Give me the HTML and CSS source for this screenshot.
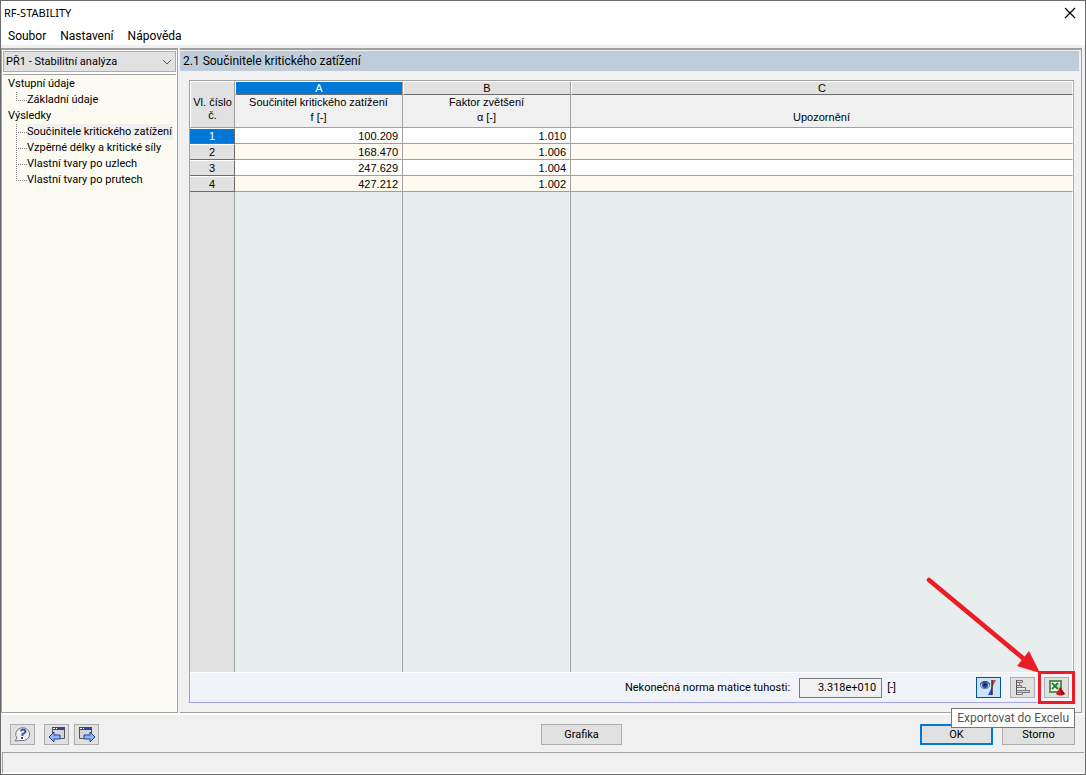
FILE: index.html
```html
<!DOCTYPE html>
<html lang="cs">
<head>
    <meta charset="UTF-8">
    <meta name="viewport" content="width=device-width, initial-scale=1.0">
    <title>RF-STABILITY</title>
    <link rel="stylesheet" href="styles.css">
</head>
<body>
    <div class="window">
        <header class="title-bar">
            <h1>RF-STABILITY</h1>
            <button class="close" aria-label="Zavřít">
                <svg width="12" height="12" viewBox="0 0 12 12"><path d="M1 1l10 10M11 1L1 11" stroke="#000" stroke-width="1.2"/></svg>
            </button>
        </header>
        <nav class="menu-bar">
            <a href="#">Soubor</a>
            <a href="#">Nastavení</a>
            <a href="#">Nápověda</a>
        </nav>

        <div class="main">
            <aside class="sidebar">
                <div class="case-select">
                    <select aria-label="Případ">
                        <option>PŘ1 - Stabilitní analýza</option>
                    </select>
                    <svg width="10" height="6" viewBox="0 0 10 6"><path d="M1 1l4 4 4-4" fill="none" stroke="#555"/></svg>
                </div>
                <ul class="tree">
                    <li>Vstupní údaje
                        <ul>
                            <li><a href="#">Základní údaje</a></li>
                        </ul>
                    </li>
                    <li>Výsledky
                        <ul>
                            <li><a href="#" class="selected">Součinitele kritického zatížení</a></li>
                            <li><a href="#">Vzpěrné délky a kritické síly</a></li>
                            <li><a href="#">Vlastní tvary po uzlech</a></li>
                            <li><a href="#">Vlastní tvary po prutech</a></li>
                        </ul>
                    </li>
                </ul>
            </aside>

            <section class="content">
                <h2>2.1 Součinitele kritického zatížení</h2>
                <div class="grid-box">
                    <div class="grid-area">
                        <table class="grid">
                            <colgroup>
                                <col class="col-no">
                                <col class="col-value">
                                <col class="col-value">
                                <col>
                            </colgroup>
                            <thead>
                                <tr class="letters">
                                    <th rowspan="2" class="corner">Vl. číslo<br>č.</th>
                                    <th class="active">A</th>
                                    <th>B</th>
                                    <th>C</th>
                                </tr>
                                <tr class="names">
                                    <th>Součinitel kritického zatížení<br>f [-]</th>
                                    <th>Faktor zvětšení<br>α [-]</th>
                                    <th><br>Upozornění</th>
                                </tr>
                            </thead>
                            <tbody>
                                <tr><th class="active">1</th><td>100.209</td><td>1.010</td><td></td></tr>
                                <tr><th>2</th><td>168.470</td><td>1.006</td><td></td></tr>
                                <tr><th>3</th><td>247.629</td><td>1.004</td><td></td></tr>
                                <tr><th>4</th><td>427.212</td><td>1.002</td><td></td></tr>
                                <tr class="filler"><th></th><td></td><td></td><td></td></tr>
                            </tbody>
                        </table>
                    </div>
                    <div class="grid-footer">
                        <label for="norm">Nekonečná norma matice tuhosti:</label>
                        <input type="text" id="norm" value="3.318e+010" readonly>
                        <span class="unit">[-]</span>
                        <div class="tools">
                            <button class="icon-btn on" aria-label="Zobrazit">
                                <svg width="18" height="18" viewBox="0 0 18 18">
                                    <ellipse cx="5" cy="6" rx="4.500" ry="3.500" fill="#c3cfe8" stroke="#6b7cab"/>
                                    <path d="M0 5q5-5 10 0" fill="none" stroke="#39457a"/>
                                    <circle cx="5" cy="6" r="3" fill="#28478f"/>
                                    <circle cx="5" cy="5.500" r="1" fill="#0c1c50"/>
                                    <path d="M12 1h4l-4 8z" fill="#e84040"/>
                                    <path d="M12 8v8H8z" fill="#3048d8"/>
                                    <path d="M12 1v15" stroke="#333" stroke-width="1.500"/>
                                </svg>
                            </button>
                            <button class="icon-btn" aria-label="Pruhy">
                                <svg width="18" height="18" viewBox="0 0 18 18">
                                    <g stroke="#777" fill="#e2eee4">
                                        <path d="M2.500 1.500h6v2h-6zM2.500 6.500h5v2h-5zM2.500 11.500h13v2h-13z" fill="#f0c8c8"/>
                                        <path d="M2.500 3.500h3v3h-3zM2.500 8.500h9v3h-9zM2.500 13.500h6v2h-6z"/>
                                        <path d="M2.500 1v15" stroke="#555"/>
                                    </g>
                                </svg>
                            </button>
                            <div class="export">
                                <button class="icon-btn" aria-label="Exportovat do Excelu" aria-describedby="export-tip">
                                    <svg width="18" height="18" viewBox="0 0 18 18">
                                        <path d="M2 2h11v11H2z" fill="#f4faf2" stroke="#5b8f55" stroke-width="2"/>
                                        <path d="M9 5h3M9 7h3M9 9h3" stroke="#9fc09f"/>
                                        <path d="M4 4l6 6M10 4l-6 6" stroke="#278432" stroke-width="2"/>
                                        <path d="M12 8l5 7q-5 3-9 0z" fill="#d81820"/>
                                        <path d="M12 8l5 7-4 1.500z" fill="#901018"/>
                                    </svg>
                                </button>
                                <svg class="arrow" width="114" height="98" viewBox="0 0 114 98">
                                    <path d="M3 4L98 83" stroke="#ed1c24" stroke-width="4.500" stroke-linecap="round"/>
                                    <path d="M114 97L103 75 91 90z" fill="#ed1c24"/>
                                </svg>
                                <div class="tooltip" id="export-tip" role="tooltip">Exportovat do Excelu</div>
                            </div>
                        </div>
                    </div>
                </div>
            </section>
        </div>

        <footer class="button-bar">
            <div class="left">
                <button class="icon-btn help" aria-label="Nápověda">
                    <svg width="18" height="18" viewBox="0 0 18 18">
                        <path d="M1 15l2-3a7 6.500 0 1 1 4 2.500z" fill="#f0f0f4" stroke="#777"/>
                        <path d="M6.500 5q3-3 5 0 0 2-3 3v2M8 11v2" fill="none" stroke="#3b549e" stroke-width="2"/>
                    </svg>
                </button>
                <button class="icon-btn" aria-label="Předchozí">
                    <svg width="18" height="18" viewBox="0 0 18 18">
                        <path d="M4.500 1.500h12v11h-12z" fill="#d4d4d6" stroke="#555"/>
                        <path d="M4 2.500h13" stroke="#34489a" stroke-width="3"/>
                        <path d="M5 2.500h2M8 2.500h1" stroke="#fff"/>
                        <path d="M1 11l5-5v3h6v4H6v3z" fill="#8cb4f4" stroke="#24409c"/>
                    </svg>
                </button>
                <button class="icon-btn" aria-label="Další">
                    <svg width="18" height="18" viewBox="0 0 18 18">
                        <path d="M1.500 1.500h12v11h-12z" fill="#d4d4d6" stroke="#555"/>
                        <path d="M1 2.500h13" stroke="#34489a" stroke-width="3"/>
                        <path d="M2 2.500h2M5 2.500h1" stroke="#fff"/>
                        <path d="M17 11l-5-5v3H6v4h6v3z" fill="#8cb4f4" stroke="#24409c"/>
                    </svg>
                </button>
            </div>
            <button class="btn graphics">Grafika</button>
            <div class="right">
                <button class="btn default">OK</button>
                <button class="btn">Storno</button>
            </div>
        </footer>
        <div class="status-bar"></div>
    </div>
</body>
</html>
```
FILE: styles.css
```css
* {
    box-sizing: border-box;
}
body {
    margin: 0;
    font-family: Roboto, sans-serif;
    font-size: 11px;
    line-height: 16px;
    color: #000;
}
a {
    color: inherit;
    text-decoration: none;
}
button, input, select {
    font: inherit;
    color: inherit;
}
svg {
    display: block;
}
.window {
    height: 100vh;
    display: flex;
    flex-direction: column;
    background-color: #f0f0f0;
    border: 1px solid #6b6b6b;
}

/* title and menu */
.title-bar {
    height: 24px;
    padding: 0 9px 0 3px;
    display: flex;
    align-items: center;
    justify-content: space-between;
    background-color: #fff;
}
.title-bar h1 {
    margin: 0;
    font-family: "Noto Sans", sans-serif;
    font-size: 11px;
    font-weight: normal;
}
.close {
    padding: 0;
    border: none;
    background: none;
}
.menu-bar {
    height: 20px;
    padding: 2px 7px 0;
    display: flex;
    align-items: center;
    gap: 14px;
    background-color: #fff;
    font-size: 12px;
}

/* sidebar */
.main {
    flex: 1;
    min-height: 0;
    margin-top: 3px;
    display: flex;
    gap: 2px;
    border-bottom: 2px solid #fff;
}
.sidebar {
    width: 177px;
    padding: 1px 1px 0;
    display: flex;
    flex-direction: column;
    gap: 2px;
    border: 1px solid #a0a0a0;
    border-top-width: 2px;
    background-color: #fff;
}
.case-select {
    display: grid;
    align-items: center;
}
.case-select select, .case-select svg {
    grid-area: 1 / 1;
}
.case-select select {
    width: 100%;
    height: 21px;
    padding: 1px 20px 0 2px;
    appearance: none;
    border: 1px solid #adadad;
    border-radius: 0;
    background-color: #e1e1e1;
}
.case-select svg {
    justify-self: end;
    margin-right: 4px;
    pointer-events: none;
}
.tree {
    flex: 1;
    margin: 0;
    padding: 1px 5px;
    border-top: 1px solid #a0a0a0;
    background-color: #fbfbf2;
    list-style: none;
}
.tree ul {
    margin: 0;
    padding: 0 0 0 8px;
    list-style: none;
}
.tree ul li {
    display: flex;
}
.tree ul li::before {
    content: "";
    flex: none;
    width: 10px;
    height: 8px;
    border-left: 1px dotted #808080;
    border-bottom: 1px dotted #808080;
}
.tree ul li:not(:first-child)::before {
    height: 16px;
    margin-top: -8px;
}
.tree ul a {
    padding-right: 1px;
    white-space: nowrap;
}
.tree .selected {
    background-color: #f0f0f0;
}

/* content */
.content {
    flex: 1;
    min-width: 0;
    margin-right: 3px;
    padding: 1px 2px 9px 0;
    display: flex;
    flex-direction: column;
    border-top: 2px solid #a0a0a0;
    border-right: 1px solid #a0a0a0;
    border-bottom: 1px solid #a0a0a0;
}
.content h2 {
    height: 20px;
    margin: 0;
    padding: 0 3px;
    font-size: 12px;
    font-weight: normal;
    line-height: 20px;
    background-color: #bfcddb;
}
.grid-box {
    flex: 1;
    min-height: 0;
    margin: 9px 5px 0 9px;
    display: flex;
    flex-direction: column;
    border: 1px solid #a4a4ec;
    border-top-color: #a0a0a0;
    border-left-color: #a0a0a0;
    background-color: #f0f4fa;
}
.grid-area {
    flex: 1;
    min-height: 0;
    border-bottom: 1px solid #fff;
}
.grid {
    width: 100%;
    height: 100%;
    table-layout: fixed;
    border-collapse: separate;
    border-spacing: 0;
    font-family: "Liberation Sans", Arial, sans-serif;
}
.col-no {
    width: 45px;
}
.col-value {
    width: 168px;
}
.grid th, .grid td {
    height: 16px;
    padding: 0;
    border-right: 1px solid #a0a0a0;
    border-bottom: 1px solid #a0a0a0;
    font-weight: normal;
    line-height: 15px;
}
.grid th:last-child, .grid td:last-child {
    border-right-color: #fff;
}
.grid .letters th {
    height: 14px;
    line-height: 11px;
    border-top: 1px solid #fff;
    border-left: 1px solid #fff;
    border-bottom-color: #6e6e6e;
    background-color: #e1e1e1;
}
.grid .names th {
    height: 33px;
    padding-bottom: 2px;
    line-height: 15px;
    background-color: #f0f0f0;
}
.grid .letters .corner {
    border-bottom-color: #a0a0a0;
    line-height: 13px;
    padding-top: 8px;
}
.grid tbody th {
    border-top: 1px solid #fff;
    border-right-color: #6e6e6e;
    border-bottom-color: #6e6e6e;
    line-height: 14px;
    background-color: #e1e1e1;
}
.grid tbody td {
    padding: 1px 4px 0 0;
    line-height: 14px;
    text-align: right;
    background-color: #fff;
}
.grid tbody tr:nth-child(even) td {
    background-color: #fffaf0;
}
.grid th.active, .grid .letters .active {
    color: #fff;
    background-color: #0078d7;
}
.grid tbody .filler th, .grid tbody .filler td {
    height: auto;
    border-bottom: none;
    border-right-color: #a0a0a0;
    background-color: #e8eeee;
}
.grid tbody .filler th {
    border-top: none;
    background-color: #e1e1e1;
}
.grid tbody .filler td:last-child {
    border-right-color: #fff;
}
.grid-footer {
    height: 29px;
    padding-right: 4px;
    display: flex;
    align-items: center;
    justify-content: flex-end;
}
.grid-footer input {
    width: 83px;
    height: 20px;
    margin: 0 5px 0 9px;
    padding: 0 5px;
    border: 1px solid #7a7a7a;
    background-color: #f0f0f0;
    text-align: right;
}
.tools {
    margin-left: 80px;
    display: flex;
    gap: 9px;
}
.icon-btn {
    width: 25px;
    height: 21px;
    padding: 0;
    display: flex;
    align-items: center;
    justify-content: center;
    border: 1px solid #adadad;
    background-color: #e1e1e1;
}
.icon-btn.on {
    border-color: #005499;
    background-color: #cce4f7;
}
.export {
    position: relative;
}
.export::after {
    content: "";
    position: absolute;
    inset: -6px;
    border: 3px solid #ed1c24;
    pointer-events: none;
}
.arrow {
    position: absolute;
    right: 29px;
    bottom: 24px;
    pointer-events: none;
}
.tooltip {
    position: absolute;
    top: 31px;
    right: -6px;
    z-index: 1;
    height: 20px;
    padding: 0 5px;
    border: 1px solid #767676;
    background-color: #fff;
    color: #575757;
    font-size: 12px;
    line-height: 18px;
    white-space: nowrap;
}

/* bottom buttons */
.button-bar {
    height: 37px;
    padding: 2px 10px 0 9px;
    display: grid;
    grid-template-columns: 1fr auto 1fr;
    align-items: center;
}
.left, .right {
    display: flex;
}
.left {
    gap: 5px;
}
.help {
    margin-right: 4px;
}
.right {
    justify-content: flex-end;
    gap: 9px;
}
.btn {
    width: 81px;
    height: 21px;
    padding: 0;
    border: 1px solid #adadad;
    background-color: #e1e1e1;
}
.graphics {
    margin-left: 78px;
}
.right .btn {
    width: 73px;
}
.btn.default {
    border: 2px solid #0078d7;
}
.status-bar {
    height: 22px;
    margin: 0 1px;
    border-top: 1px solid #a0a0a0;
    border-left: 1px solid #a0a0a0;
    border-bottom: 2px solid #fff;
}
```
